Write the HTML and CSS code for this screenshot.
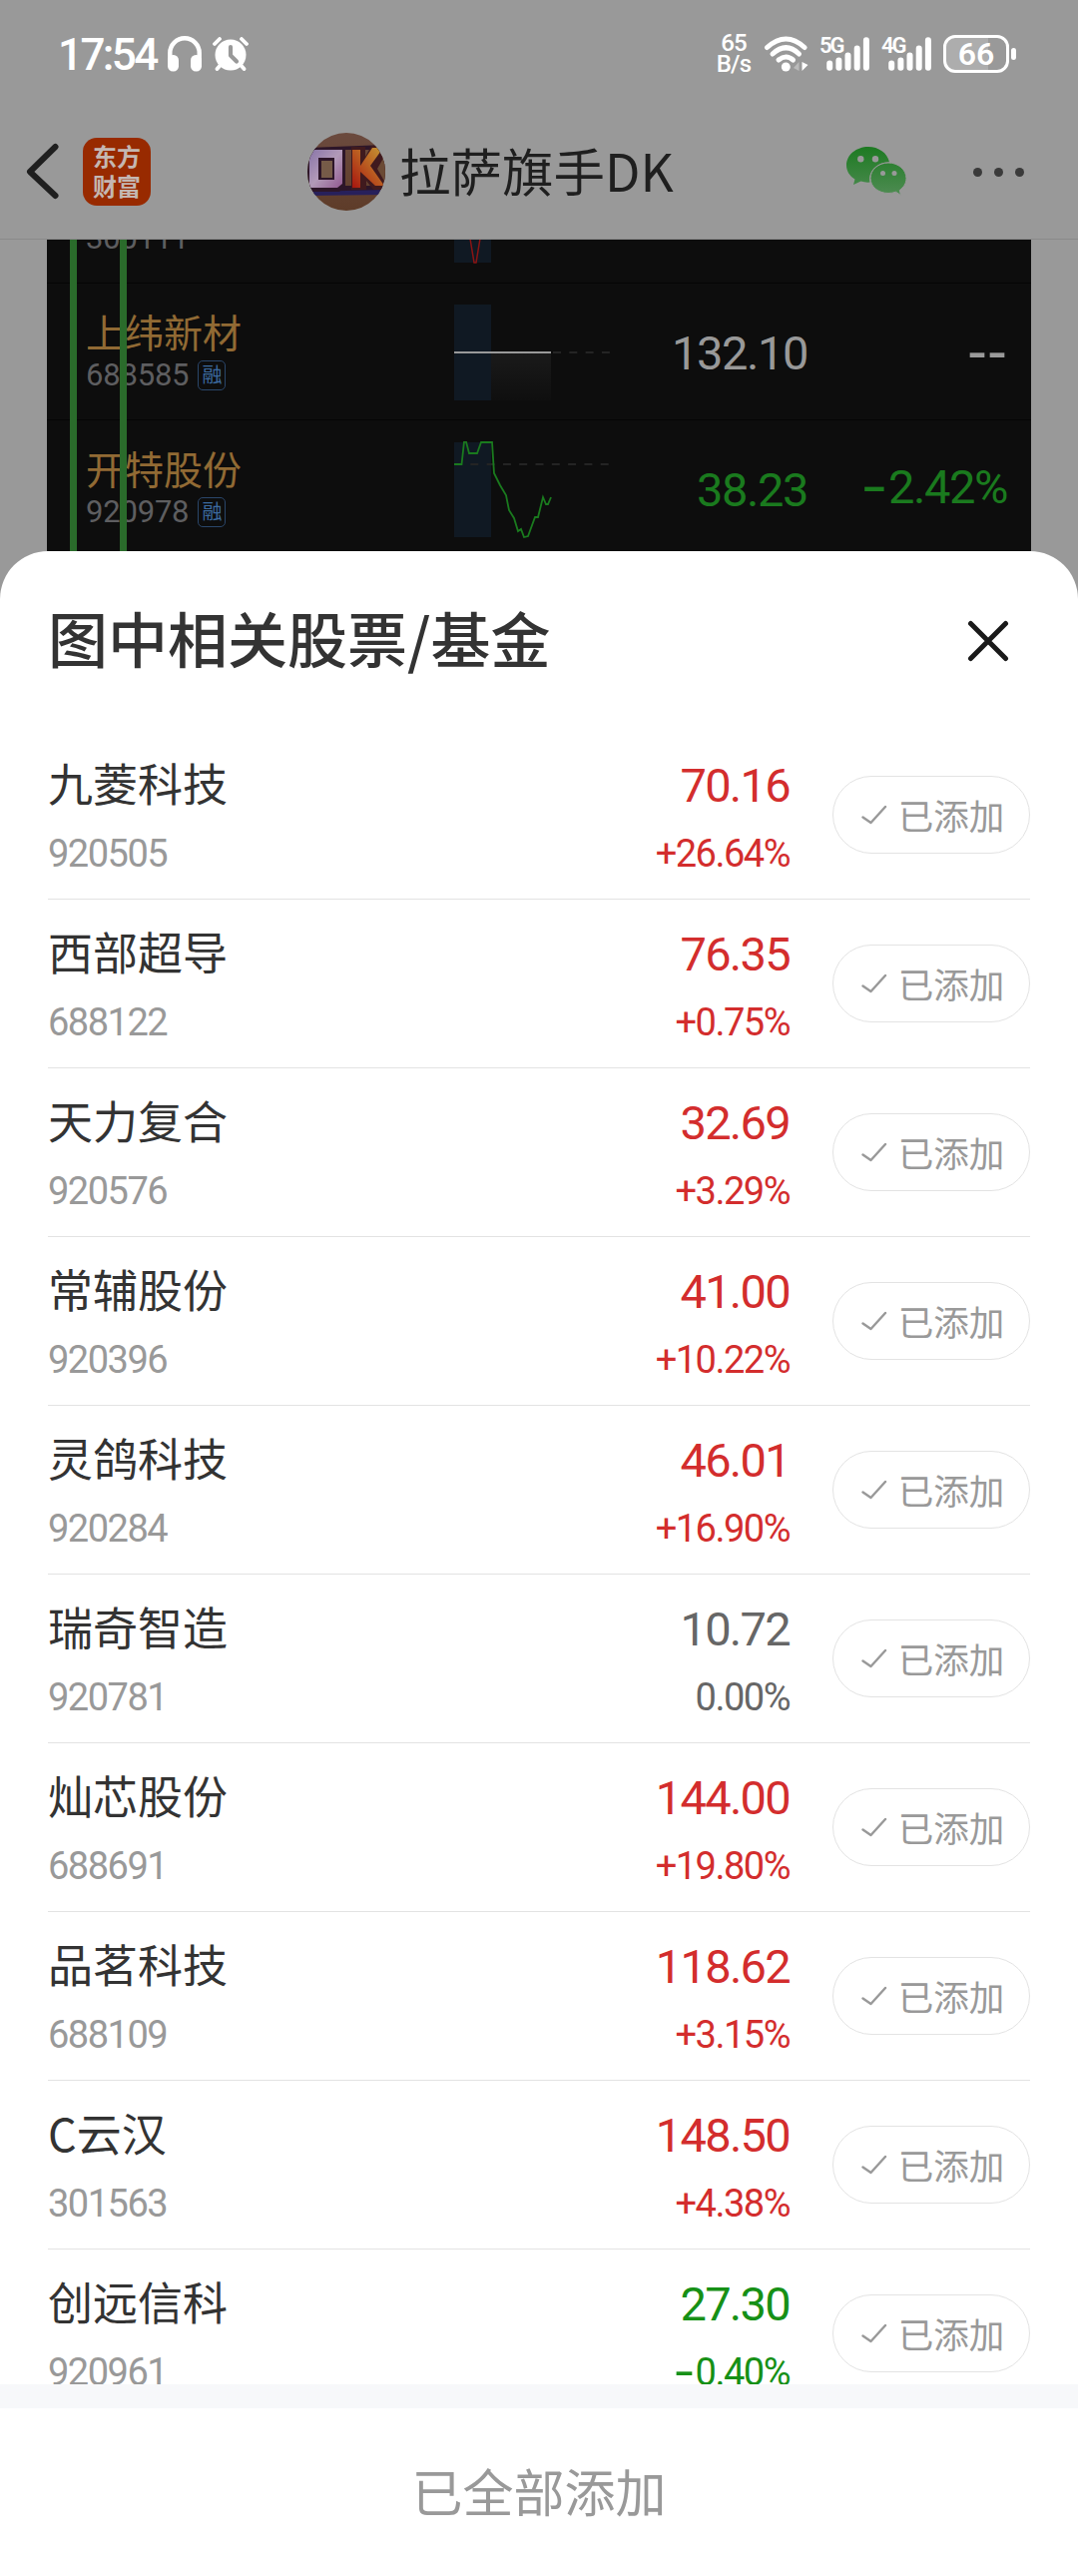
FILE: index.html
```
<!DOCTYPE html>
<html lang="zh-CN">
<head>
    <meta charset="UTF-8">
    <meta name="viewport" content="width=device-width, initial-scale=1.0">
    <title>图中相关股票/基金</title>
    <link rel="stylesheet" href="styles.css">
</head>
<body>
    <svg class="defs" width="0" height="0">
        <symbol id="check" viewBox="0 0 26 20">
            <path d="M1.5 12.5 L9.5 18 L24 2" fill="none" stroke="#999" stroke-width="2.4" stroke-linecap="round" stroke-linejoin="round"/>
        </symbol>
        <symbol id="signal" viewBox="0 0 44 34">
            <path d="M3.2 26.5V30.8M12.4 23.5V30.8M21.5 18.5V30.8M30.7 11.5V30.8M39.9 3.2V30.8" stroke="#fff" stroke-width="6" stroke-linecap="round"/>
        </symbol>
    </svg>

    <!-- status bar -->
    <div class="status-bar">
        <span class="time">17:54</span>
        <svg class="headphones" width="34" height="36" viewBox="0 0 34 36">
            <path d="M2.3 27V17a14.7 14.7 0 0 1 29.4 0V27" fill="none" stroke="#fff" stroke-width="4.4"/>
            <rect x="0" y="19" width="11" height="16.500" rx="5.200" fill="#fff"/>
            <rect x="23" y="19" width="11" height="16.500" rx="5.200" fill="#fff"/>
        </svg>
        <svg class="alarm" width="36" height="34" viewBox="0 0 36 34">
            <path d="M2 7L7 2M34 7L29 2M4.500 32L8 28M31.500 32L28 28" stroke="#fff" stroke-width="3.800" stroke-linecap="round"/>
            <circle cx="18" cy="18" r="15.500" fill="#fff"/>
            <path d="M18 10V18.500L24 24.500" fill="none" stroke="#999" stroke-width="4.200" stroke-linecap="round" stroke-linejoin="round"/>
        </svg>
        <div class="speed"><span>65</span><span>B/s</span></div>
        <svg class="wifi" width="46" height="36" viewBox="0 0 46 36">
            <g fill="none" stroke="#fff" stroke-width="5" stroke-linecap="round">
                <path d="M3.500 11.500Q22.500 -5.500 41 11.500"/>
                <path d="M9 18Q22.500 5.500 35.500 18"/>
                <path d="M15 24Q22.500 18 29.500 24"/>
            </g>
            <circle cx="22.300" cy="31" r="4.500" fill="#fff"/>
            <path d="M30 32L35.500 26V35Z" fill="#bbb"/>
            <path d="M38.500 26V35L44.500 29Z" fill="#fff"/>
        </svg>
        <div class="network">
            <span>5G</span>
            <svg width="44" height="34"><use href="#signal"/></svg>
        </div>
        <div class="network">
            <span>4G</span>
            <svg width="44" height="34"><use href="#signal"/></svg>
        </div>
        <div class="battery">66</div>
        <div class="battery-tip"></div>
    </div>

    <!-- nav bar -->
    <div class="nav-bar">
        <svg class="back" width="34" height="58" viewBox="0 0 34 58">
            <path d="M29.500 4L4 29L29.500 53" fill="none" stroke="#1f1f1f" stroke-width="6" stroke-linecap="round" stroke-linejoin="round"/>
        </svg>
        <div class="logo"><span>东方</span><span>财富</span></div>
        <svg class="avatar" width="78" height="78" viewBox="0 0 78 78">
            <defs>
                <clipPath id="round"><circle cx="39" cy="39" r="39"/></clipPath>
                <linearGradient id="wall" x2="0" y2="1">
                    <stop offset="0" stop-color="#6b4a3e"/><stop offset="1" stop-color="#5e3c29"/>
                </linearGradient>
                <linearGradient id="o" x2="1" y2="1">
                    <stop offset="0" stop-color="#8975a8"/><stop offset=".5" stop-color="#b29ab8"/><stop offset="1" stop-color="#925a91"/>
                </linearGradient>
                <linearGradient id="k" x1="0" y1="1" x2="1" y2="0">
                    <stop offset="0" stop-color="#a8160f"/><stop offset=".5" stop-color="#b95a20"/><stop offset="1" stop-color="#c59a35"/>
                </linearGradient>
            </defs>
            <g clip-path="url(#round)">
                <rect width="78" height="78" fill="url(#wall)"/>
                <path d="M0 15L78 12V17H0Z" fill="#2d1629"/>
                <path d="M0 55L78 54V62L0 63Z" fill="#27205b"/>
                <path d="M0 53L78 53V57L0 59Z" fill="#2d1629"/>
                <path d="M3 16H38V53L32 59H0V22Z" fill="#2d1629"/>
                <path d="M44 14H58V24L64 13H78V57H66L59 48V57H44Z" fill="#401a1e"/>
                <path d="M70 36L78 22V50Z" fill="#6b4a35"/>
                <path d="M6 17H35V51L30 55H2V23Z" fill="url(#o)"/>
                <path d="M11 25H27V47H11Z" fill="#2d1629"/>
                <path d="M14 28H25V45H14Z" fill="#765b48"/>
                <path d="M45 17H53V33L65 15H76L63 33L77 53H68L53 39V55H45Z" fill="url(#k)"/>
            </g>
        </svg>
        <h1>拉萨旗手DK</h1>
        <svg class="wechat" width="62" height="50" viewBox="0 0 62 50">
            <defs>
                <linearGradient id="wx" x1="0" y1="0" x2="0" y2="50" gradientUnits="userSpaceOnUse">
                    <stop offset="0" stop-color="#1d7a22"/><stop offset="1" stop-color="#508c54"/>
                </linearGradient>
            </defs>
            <path d="M22 0C10 0 0 8 0 18.500C0 24.500 3.500 29.500 8.500 32.500L7 38L14.500 34.500Q19 36 23.500 35.500C21.500 25 30 15.500 43 15.200C41 6 32 0 22 0Z" fill="url(#wx)"/>
            <path d="M42 16C32 16 24 23 24 31.500C24 40 32 46.500 42 46.500Q46 46.500 49.500 45.200L54.500 48.500L53.300 43.500C57.500 40.500 60 36.500 60 31.500C60 23 52 16 42 16Z" fill="url(#wx)" stroke="#999" stroke-width="1"/>
            <g fill="#999">
                <circle cx="14.300" cy="12.300" r="3.200"/><circle cx="29" cy="12.300" r="3.200"/>
                <circle cx="36.500" cy="26.500" r="2.500"/><circle cx="48" cy="26.500" r="2.500"/>
            </g>
        </svg>
        <div class="more"><i></i><i></i><i></i></div>
    </div>

    <!-- posted picture, dimmed behind the sheet -->
    <div class="post-image">
        <div class="quote">
            <div class="quote-info"><b>&nbsp;</b><div class="quote-code">300111</div></div>
            <svg class="spark" width="160" height="98" viewBox="0 0 160 98">
                <rect width="37" height="95" fill="#101923"/>
                <path d="M16 71L20 95H22L26 71" fill="none" stroke="#8a1414" stroke-width="1.500"/>
            </svg>
        </div>
        <div class="quote">
            <div class="quote-info"><b>上纬新材</b><div class="quote-code">688585<em>融</em></div></div>
            <svg class="spark" width="160" height="98" viewBox="0 0 160 98">
                <defs>
                    <linearGradient id="fade" x2="0" y2="1">
                        <stop offset="0" stop-color="#1a1a1a"/><stop offset="1" stop-color="#0f0f0f"/>
                    </linearGradient>
                </defs>
                <rect width="37" height="96" fill="#101923"/>
                <rect x="37" y="49" width="60" height="47" fill="url(#fade)"/>
                <path d="M0 48H97" stroke="#999" stroke-width="2"/>
                <path d="M99 48H160" stroke="#242424" stroke-width="1.800" stroke-dasharray="8 8.300"/>
            </svg>
            <div class="quote-price">132.10</div>
            <div class="quote-change dashes">--</div>
        </div>
        <div class="quote">
            <div class="quote-info"><b>开特股份</b><div class="quote-code">920978<em>融</em></div></div>
            <svg class="spark" width="160" height="98" viewBox="0 0 160 98">
                <rect y="1" width="37" height="95" fill="#101923"/>
                <path d="M0 23H160" stroke="#242424" stroke-width="1.800" stroke-dasharray="8 8.300"/>
                <path d="M0 23H7.500L10 0.500H12L15 12H23L27 1H38L40 32L46 44L52 54L55 69L60 77L64 90L67 88L70 96L74 95L81 76H84L89 56L92 63H94L97 56" fill="none" stroke="#1a7a1e" stroke-width="1.800"/>
            </svg>
            <div class="quote-price down">38.23</div>
            <div class="quote-change down"><span class="minus">-</span>2.42%</div>
        </div>
        <div class="marker marker-1"></div>
        <div class="marker marker-2"></div>
    </div>

    <!-- bottom sheet -->
    <div class="sheet">
        <div class="sheet-header">
            <h2>图中相关股票/基金</h2>
            <svg class="close" width="42" height="42" viewBox="0 0 42 42">
                <path d="M3.500 3.500L38.500 38.500M38.500 3.500L3.500 38.500" stroke="#1a1a1a" stroke-width="5" stroke-linecap="round"/>
            </svg>
        </div>

        <div class="stock-list">
            <div class="stock">
                <div class="stock-info"><div class="name">九菱科技</div><div class="code">920505</div></div>
                <div class="stock-price up"><div class="price">70.16</div><div class="change">+26.64%</div></div>
                <div class="added"><svg width="26" height="20"><use href="#check"/></svg>已添加</div>
            </div>
            <div class="stock">
                <div class="stock-info"><div class="name">西部超导</div><div class="code">688122</div></div>
                <div class="stock-price up"><div class="price">76.35</div><div class="change">+0.75%</div></div>
                <div class="added"><svg width="26" height="20"><use href="#check"/></svg>已添加</div>
            </div>
            <div class="stock">
                <div class="stock-info"><div class="name">天力复合</div><div class="code">920576</div></div>
                <div class="stock-price up"><div class="price">32.69</div><div class="change">+3.29%</div></div>
                <div class="added"><svg width="26" height="20"><use href="#check"/></svg>已添加</div>
            </div>
            <div class="stock">
                <div class="stock-info"><div class="name">常辅股份</div><div class="code">920396</div></div>
                <div class="stock-price up"><div class="price">41.00</div><div class="change">+10.22%</div></div>
                <div class="added"><svg width="26" height="20"><use href="#check"/></svg>已添加</div>
            </div>
            <div class="stock">
                <div class="stock-info"><div class="name">灵鸽科技</div><div class="code">920284</div></div>
                <div class="stock-price up"><div class="price">46.01</div><div class="change">+16.90%</div></div>
                <div class="added"><svg width="26" height="20"><use href="#check"/></svg>已添加</div>
            </div>
            <div class="stock">
                <div class="stock-info"><div class="name">瑞奇智造</div><div class="code">920781</div></div>
                <div class="stock-price"><div class="price">10.72</div><div class="change">0.00%</div></div>
                <div class="added"><svg width="26" height="20"><use href="#check"/></svg>已添加</div>
            </div>
            <div class="stock">
                <div class="stock-info"><div class="name">灿芯股份</div><div class="code">688691</div></div>
                <div class="stock-price up"><div class="price">144.00</div><div class="change">+19.80%</div></div>
                <div class="added"><svg width="26" height="20"><use href="#check"/></svg>已添加</div>
            </div>
            <div class="stock">
                <div class="stock-info"><div class="name">品茗科技</div><div class="code">688109</div></div>
                <div class="stock-price up"><div class="price">118.62</div><div class="change">+3.15%</div></div>
                <div class="added"><svg width="26" height="20"><use href="#check"/></svg>已添加</div>
            </div>
            <div class="stock">
                <div class="stock-info"><div class="name">C云汉</div><div class="code">301563</div></div>
                <div class="stock-price up"><div class="price">148.50</div><div class="change">+4.38%</div></div>
                <div class="added"><svg width="26" height="20"><use href="#check"/></svg>已添加</div>
            </div>
            <div class="stock">
                <div class="stock-info"><div class="name">创远信科</div><div class="code">920961</div></div>
                <div class="stock-price fall"><div class="price">27.30</div><div class="change"><span class="minus">-</span>0.40%</div></div>
                <div class="added"><svg width="26" height="20"><use href="#check"/></svg>已添加</div>
            </div>
        </div>

        <div class="sheet-footer">已全部添加</div>
    </div>
</body>
</html>
```
FILE: styles.css
```
* {
    box-sizing: border-box;
}
body {
    margin: 0;
    width: 1080px;
    height: 2580px;
    overflow: hidden;
    background-color: #999;
    font-family: 'Noto Sans CJK SC', sans-serif;
    color: #333;
    display: flex;
    flex-direction: column;
}
svg {
    display: block;
    flex-shrink: 0;
}
.defs {
    position: absolute;
}

/* status bar */
.status-bar {
    height: 105px;
    padding: 2px 62px 0 58px;
    display: flex;
    align-items: center;
    color: #fff;
    font-family: Roboto, sans-serif;
}
.time {
    width: 110px;
    padding-top: 2px;
    font-size: 44px;
    font-weight: 500;
    letter-spacing: -2.6px;
}
.alarm {
    margin-left: 11px;
}
.speed {
    width: 36px;
    margin: 0 12px 0 auto;
    display: flex;
    flex-direction: column;
    text-align: center;
    font-size: 24px;
    line-height: 21px;
    font-weight: 500;
    letter-spacing: -0.8px;
}
.wifi {
    margin-right: 10px;
}
.network {
    display: flex;
    width: 62px;
}
.network span {
    width: 24px;
    margin-right: -17px;
    font-size: 22px;
    line-height: 18px;
    font-weight: 600;
    letter-spacing: -2px;
}
.battery {
    width: 66px;
    height: 38px;
    border: 3px solid #fff;
    border-radius: 12px;
    background: linear-gradient(to right, #adadad 70%, transparent 70%);
    font-size: 32px;
    line-height: 33px;
    font-weight: 600;
    text-align: center;
}
.battery-tip {
    width: 5px;
    height: 12px;
    margin-left: 2px;
    border-radius: 3px;
    background-color: #fff;
}

/* nav bar */
.nav-bar {
    height: 135px;
    padding-left: 26px;
    border-bottom: 1px solid #8a8a8a;
    display: flex;
    align-items: center;
}
.logo {
    width: 68px;
    height: 68px;
    margin-left: 23px;
    padding-top: 3px;
    border-radius: 14px;
    background-color: #982a00;
    color: #c4b7b2;
    display: flex;
    flex-direction: column;
    text-align: center;
    font-size: 24px;
    line-height: 30px;
    font-weight: 700;
}
.avatar {
    margin-left: 157px;
}
h1 {
    width: 290px;
    margin: 0 0 4px 14px;
    font-size: 51.5px;
    line-height: 70px;
    font-weight: 400;
    color: #1f1f1f;
    white-space: nowrap;
}
.wechat {
    margin-left: 158px;
}
.more {
    display: flex;
    gap: 12px;
    margin-left: 65px;
}
.more i {
    width: 9px;
    height: 9px;
    border-radius: 50%;
    background-color: #3a3a3a;
}

/* dimmed picture */
.post-image {
    position: relative;
    height: 312px;
    margin: 0 47px;
    overflow: hidden;
    background-color: #0d0d0d;
    display: flex;
    flex-direction: column;
    justify-content: flex-end;
}
.quote {
    height: 137px;
    flex-shrink: 0;
    padding: 21px 24px 0 39px;
    border-top: 1px solid #050505;
    display: flex;
    font-family: Roboto, sans-serif;
}
.quote:nth-child(3) {
    height: 132px;
}
.quote-info {
    width: 369px;
}
.quote-info b {
    display: block;
    margin-top: -2px;
    font-family: 'Noto Sans CJK SC', sans-serif;
    font-size: 39px;
    line-height: 56px;
    font-weight: 400;
    color: #916a34;
}
.quote-code {
    display: flex;
    align-items: center;
    font-size: 31px;
    line-height: 34px;
    letter-spacing: -0.2px;
    color: #5e5e60;
}
.quote-code em {
    width: 28px;
    height: 30px;
    margin-left: 9px;
    border: 1.5px solid #2a466a;
    border-radius: 5px;
    font-family: 'Noto Sans CJK SC', sans-serif;
    font-size: 20px;
    line-height: 25px;
    font-style: normal;
    text-align: center;
    color: #3c6ba0;
}
.quote-price,
.quote-change {
    font-size: 47px;
    line-height: 56px;
    letter-spacing: -1.4px;
    text-align: right;
    color: #999;
}
.quote-price {
    width: 194px;
    padding-top: 21px;
}
.quote-change {
    width: 200px;
    padding-top: 18px;
}
.minus {
    display: inline-block;
    font-weight: 500;
    transform: scaleX(1.6);
    transform-origin: right;
    margin-right: 3px;
}
.dashes {
    font-family: 'Liberation Sans', sans-serif;
    font-size: 60px;
    letter-spacing: 0;
}
.quote .down {
    color: #1a7a1e;
}
/* hand drawn strokes over the picture */
.marker {
    position: absolute;
    top: 0;
    width: 7px;
    height: 312px;
    background-color: #2a6b2b;
}
.marker-1 {
    left: 23px;
}
.marker-2 {
    left: 73px;
}

/* bottom sheet */
.sheet {
    height: 2028px;
    border-radius: 48px 48px 0 0;
    background-color: #fff;
}
.sheet-header {
    height: 180px;
    padding: 0 69px 0 48px;
    display: flex;
    align-items: center;
    justify-content: space-between;
}
h2 {
    margin: 0 0 8px;
    font-size: 60px;
    line-height: 80px;
    font-weight: 500;
}
.stock-list {
    height: 1656px;
    padding: 0 48px;
    overflow: hidden;
}
.stock {
    height: 169px;
    padding-top: 20px;
    border-bottom: 1px solid #e3e3e3;
    display: flex;
}
.stock-info {
    flex: 1;
}
.name {
    font-size: 45px;
    line-height: 64px;
}
.code {
    margin-top: 5px;
    font-family: Roboto, sans-serif;
    font-size: 38px;
    line-height: 68px;
    letter-spacing: -1.5px;
    color: #999;
}
.stock-price {
    margin-right: 43px;
    font-family: Roboto, sans-serif;
    text-align: right;
    color: #666;
}
.price {
    font-size: 47px;
    line-height: 70px;
    letter-spacing: -1.7px;
}
.change {
    font-size: 38px;
    line-height: 66px;
    letter-spacing: -1.5px;
}
.up {
    color: #d32d2d;
}
.fall {
    color: #169016;
}
.added {
    width: 198px;
    height: 78px;
    margin-top: 25px;
    padding-left: 3px;
    border: 1px solid #e3e3e3;
    border-radius: 39px;
    display: flex;
    align-items: center;
    justify-content: center;
    gap: 11px;
    font-size: 35.5px;
    line-height: 72px;
    padding-bottom: 1px;
    color: #999;
}
.sheet-footer {
    height: 192px;
    border-top: 24px solid #f7f8fa;
    font-size: 51px;
    line-height: 165px;
    text-align: center;
    color: #999;
}
```
